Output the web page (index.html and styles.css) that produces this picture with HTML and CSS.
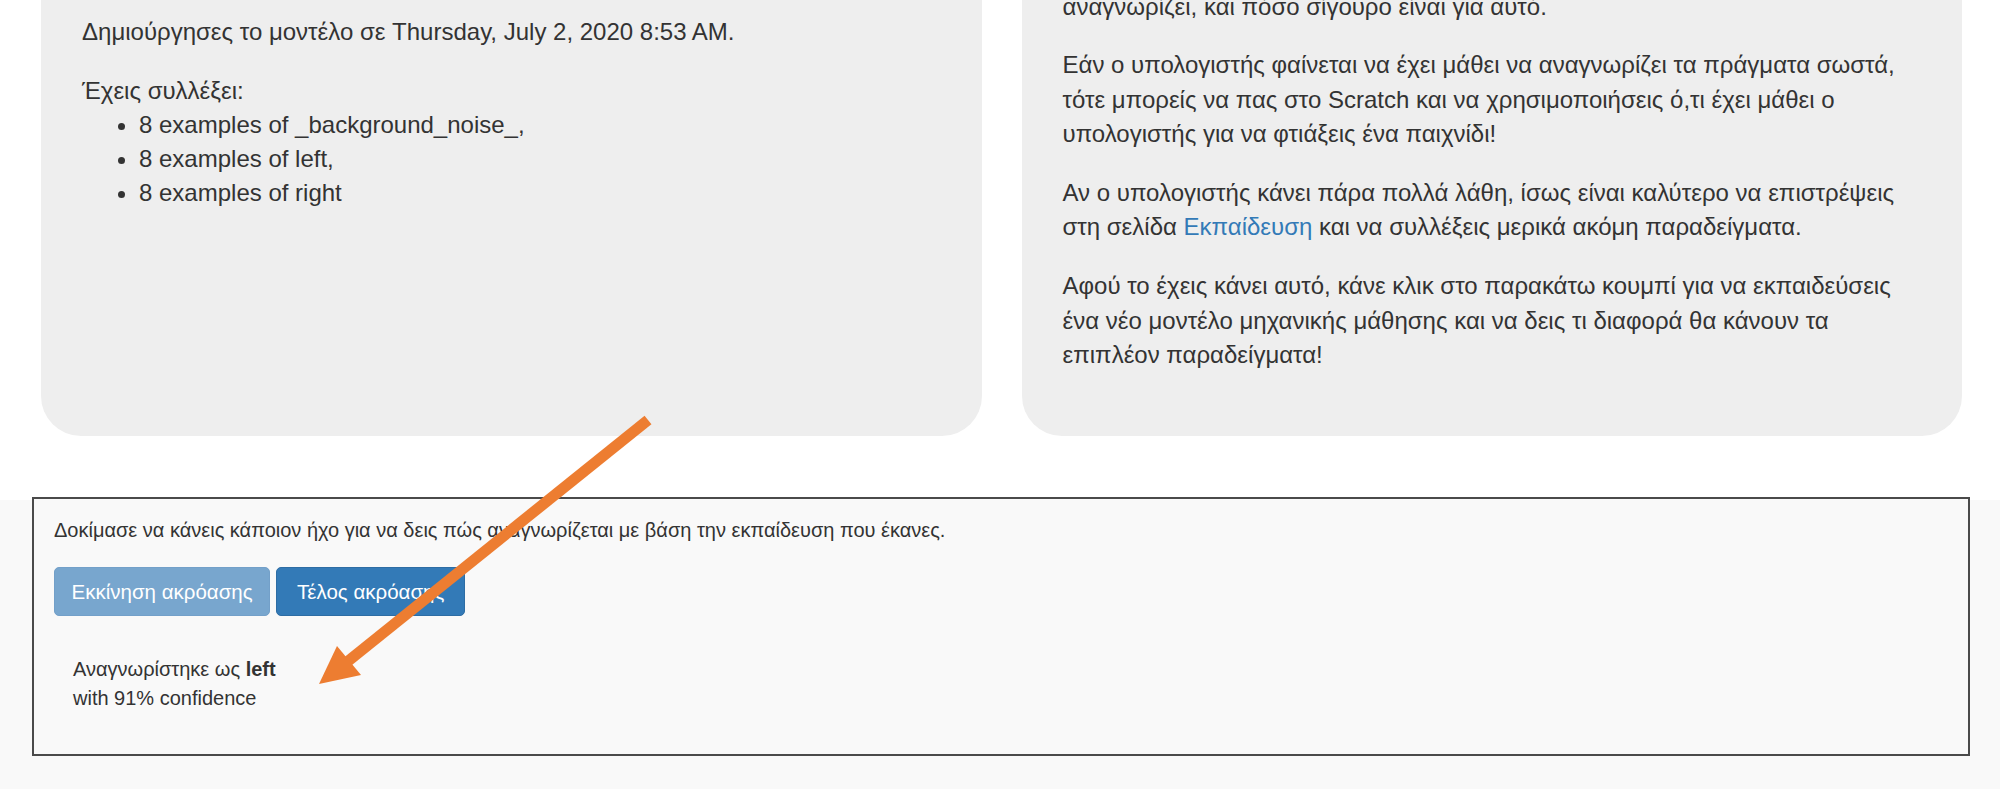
FILE: index.html
```html
<!DOCTYPE html>
<html lang="el">
<head>
<meta charset="utf-8">
<title>Δοκιμή μοντέλου</title>
<link rel="stylesheet" href="styles.css">
</head>
<body>
<div class="page">
  <div class="cards">
    <div class="card">
      <p class="intro">Δημιούργησες το μοντέλο σε Thursday, July 2, 2020 8:53 AM.</p>
      <p class="collected">Έχεις συλλέξει:</p>
      <ul class="examples">
        <li>8 examples of _background_noise_,</li>
        <li>8 examples of left,</li>
        <li>8 examples of right</li>
      </ul>
    </div>
    <div class="card">
      <p>αναγνωρίζει, και πόσο σίγουρο είναι για αυτό.</p>
      <p>Εάν ο υπολογιστής φαίνεται να έχει μάθει να αναγνωρίζει τα πράγματα σωστά, τότε μπορείς να πας στο Scratch και να χρησιμοποιήσεις ό,τι έχει μάθει ο υπολογιστής για να φτιάξεις ένα παιχνίδι!</p>
      <p>Αν ο υπολογιστής κάνει πάρα πολλά λάθη, ίσως είναι καλύτερο να επιστρέψεις στη σελίδα <a class="link" href="#">Εκπαίδευση</a> και να συλλέξεις μερικά ακόμη παραδείγματα.</p>
      <p>Αφού το έχεις κάνει αυτό, κάνε κλικ στο παρακάτω κουμπί για να εκπαιδεύσεις ένα νέο μοντέλο μηχανικής μάθησης και να δεις τι διαφορά θα κάνουν τα επιπλέον παραδείγματα!</p>
    </div>
  </div>

  <div class="test-area">
    <div class="test-box">
      <div class="test-prompt">Δοκίμασε να κάνεις κάποιον ήχο για να δεις πώς αναγνωρίζεται με βάση την εκπαίδευση που έκανες.</div>
      <div class="buttons">
        <button class="btn btn-disabled" type="button">Εκκίνηση ακρόασης</button>
        <button class="btn btn-primary" type="button">Τέλος ακρόασης</button>
      </div>
      <div class="result">
        <div>Αναγνωρίστηκε ως <strong>left</strong></div>
        <div>with 91% confidence</div>
      </div>
    </div>
  </div>

  <svg class="annotation" width="2000" height="789" viewBox="0 0 2000 789" aria-hidden="true">
    <line x1="648" y1="420" x2="347" y2="662" stroke="#ed7d31" stroke-width="11" stroke-linecap="butt"/>
    <polygon points="319,684 337,646 361,675" fill="#ed7d31"/>
  </svg>
</div>
</body>
</html>
```

FILE: styles.css
```css
html, body {
  margin: 0;
  padding: 0;
  background: #ffffff;
  overflow: hidden;
}

body {
  font-family: "Liberation Sans", Arial, sans-serif;
  color: #333333;
}

.page {
  position: relative;
  width: 2000px;
  height: 789px;
  overflow: hidden;
}

.cards {
  display: grid;
  grid-template-columns: 1fr 1fr;
  gap: 40px;
  margin: -38.5px 38px 64px 41px;
}

.card {
  background: #eeeeee;
  border-radius: 40px;
  padding: 28px 40px 39px 41px;
  font-size: 24px;
  line-height: 34.6px;
}

.card p {
  margin: 0 0 24px 0;
}

.card p.intro {
  margin-top: 25.5px;
}

.card p.collected {
  margin-bottom: 0;
}

.examples {
  margin: 0;
  padding-left: 57px;
}

.examples li {
  line-height: 33.8px;
}

.link {
  color: #337ab7;
  text-decoration: none;
}

.test-area {
  background: #f9f9f9;
  height: 289px;
}

.test-box {
  position: relative;
  top: -3px;
  margin: 0 30px 0 32px;
  border: 2px solid #4a4a4a;
  padding: 17.3px 20px 42px 20px;
  background: #f9f9f9;
}

.test-prompt {
  font-size: 20px;
  line-height: 28.57px;
}

.buttons {
  display: flex;
  gap: 6px;
  margin-top: 22.1px;
}

.btn {
  display: inline-flex;
  align-items: center;
  justify-content: center;
  box-sizing: border-box;
  height: 49px;
  font-family: "Liberation Sans", Arial, sans-serif;
  font-size: 20.5px;
  line-height: 29.3px;
  padding: 0 16.5px;
  border: 1.33px solid transparent;
  border-radius: 5px;
  color: #ffffff;
  cursor: pointer;
}

.btn-disabled {
  background: #78a6ce;
  border-color: #73a0c9;
  cursor: not-allowed;
}

.btn-primary {
  background: #337ab7;
  border-color: #2e6da4;
  padding: 0 20px;
}

.result {
  margin-top: 39px;
  padding-left: 19px;
  font-size: 20px;
  line-height: 28.8px;
}

.result strong {
  font-weight: 700;
}

.annotation {
  position: absolute;
  left: 0;
  top: 0;
  pointer-events: none;
}
```
